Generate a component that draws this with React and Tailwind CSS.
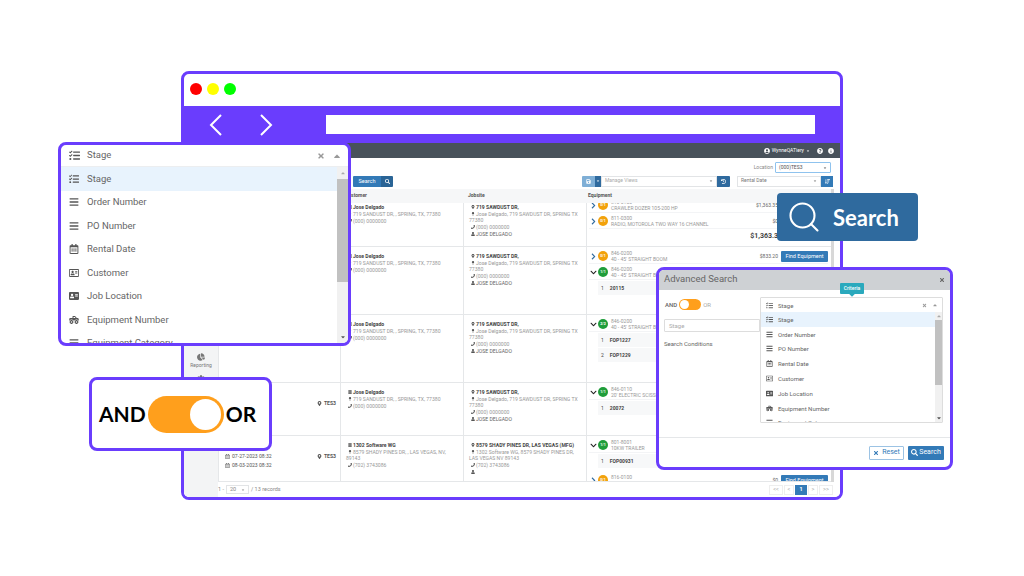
import {
  FaTasks, FaBars, FaRegCalendarAlt, FaRegAddressCard, FaAddressCard, FaTruckMonster,
  FaTimes, FaCaretUp, FaCaretDown, FaSearch, FaSave, FaHistory, FaSortAmountDown,
  FaQuestionCircle, FaInfoCircle, FaUserCircle, FaMapMarkerAlt, FaPhone, FaUser,
  FaBuilding, FaChevronRight, FaChevronDown, FaChartPie, FaMapPin, FaCog,
} from "react-icons/fa";
import { Search } from "lucide-react";

const options = [
  { label: "Stage", Icon: FaTasks },
  { label: "Order Number", Icon: FaBars },
  { label: "PO Number", Icon: FaBars },
  { label: "Rental Date", Icon: FaRegCalendarAlt },
  { label: "Customer", Icon: FaRegAddressCard },
  { label: "Job Location", Icon: FaAddressCard },
  { label: "Equipment Number", Icon: FaTruckMonster },
  { label: "Equipment Category", Icon: FaBars },
];

const sawdust = {
  customer: "Jose Delgado",
  address: "719 SANDUST DR, , SPRING, TX, 77380",
  phone: "(000) 0000000",
  site: "719 SAWDUST DR,",
  siteLine: "Jose Delgado, 719 SAWDUST DR, SPRING TX 77380",
  contact: "JOSE DELGADO",
};

const rows = [
  {
    ...sawdust, height: "h-[44px]", clip: "-mt-[5px]", equipClip: "-mt-[7px]",
    equipment: [
      { code: "816-0100", name: "CRAWLER DOZER 105-200 HP", badge: "0/1", price: "$1,363.35", find: true },
      { code: "811-0300", name: "RADIO, MOTOROLA TWO WAY 16 CHANNEL", badge: "0/1", price: "$0", find: true },
    ],
    total: "$1,363.35",
  },
  {
    ...sawdust, height: "h-[68px]",
    equipment: [
      { code: "846-0200", name: "40 - 45' STRAIGHT BOOM", badge: "0/1", price: "$833.20", find: true },
      { code: "846-0200", name: "40 - 45' STRAIGHT BOOM", badge: "1/1", open: true, find: true, items: ["20115"] },
    ],
  },
  {
    ...sawdust, height: "h-[68px]",
    equipment: [
      { code: "846-0200", name: "40 - 45' STRAIGHT BOOM", badge: "2/2", open: true, items: ["FOP1227", "FOP1229"] },
    ],
  },
  {
    ...sawdust, height: "h-[53px]", location: "TES3",
    equipment: [
      { code: "846-0110", name: "20' ELECTRIC SCISSOR", badge: "1/1", open: true, items: ["20072"] },
    ],
  },
  {
    height: "h-[46px]", location: "TES3", dates: ["07-27-2023 08:32", "08-03-2023 08:32"],
    customer: "1302 Software WG",
    address: "8579 SHADY PINES DR, , LAS VEGAS, NV, 89143",
    phone: "(702) 3743086",
    site: "8579 SHADY PINES DR, LAS VEGAS (MFG)",
    siteLine: "1302 Software WG, 8579 SHADY PINES DR, LAS VEGAS NV 89143",
    contact: "",
    equipment: [
      { code: "801-8001", name: "10KW TRAILER", badge: "1/1", open: true, items: ["FOP00931"] },
      { code: "816-0100", name: "CRAWLER DOZER 105-200 HP", badge: "0/1", price: "$0", find: true },
    ],
  },
];

function Line({ Icon, className = "", children }) {
  return (
    <div className={`mb-[1px] ${className}`}>
      <span className="inline-flex w-[7px] justify-center text-[#555]">
        <Icon size={4} />
      </span>
      {children}
    </div>
  );
}

function Equipment({ item }) {
  const done = item.badge !== "0/1";
  return (
    <div className={item.open ? "mb-[5px]" : "mb-[1px]"}>
      <div className="flex items-center h-[15px] border-b border-gray-100">
        <span className="w-[9px] flex justify-center text-[#2f6a9e]">
          {item.open ? <FaChevronDown size={7} className="text-[#222]" /> : <FaChevronRight size={7} />}
        </span>
        <span className={`w-[10px] h-[10px] rounded-full flex items-center justify-center text-[3.5px] font-bold text-white ${done ? "bg-[#1f9d3a]" : "bg-[#f2a20c]"}`}>
          {item.badge}
        </span>
        <div className="ml-[3px] flex-1 min-w-0 leading-[6px] text-[#999] text-[5px] whitespace-nowrap">
          <div>{item.code}</div>
          <div>{item.name}</div>
        </div>
        {item.price && <span className="text-[5px] text-[#666] mr-[3px]">{item.price}</span>}
        {item.find && (
          <span className="w-[47px] h-[11px] rounded-[1px] bg-[#337ab7] text-white text-[5.5px] flex items-center justify-center">
            Find Equipment
          </span>
        )}
      </div>
      {item.items?.map((value, i) => (
        <div key={value} className="flex items-center h-[14px] mt-[1px] ml-[9px] pl-[3px] bg-[#f7f8f9] text-[5px] gap-[6px] text-[#444]">
          <span>{i + 1}</span>
          <span className="font-bold">{value}</span>
        </div>
      ))}
    </div>
  );
}

function Row({ row }) {
  return (
    <div className={`grid grid-cols-[122px_123px_123px_244px] shrink-0 overflow-hidden border-b border-[#e5e7e9] text-[5.1px] leading-[6px] text-[#999] ${row.height}`}>
      <div className="flex items-start justify-between pl-[6px] pr-[4px] pt-[17px] border-r border-[#e5e7e9]">
        <div className="flex flex-col gap-[3px] text-[#555]">
          {row.dates?.map((d) => (
            <span key={d} className="flex items-center gap-[2px]">
              <FaRegCalendarAlt size={5} />
              {d}
            </span>
          ))}
        </div>
        {row.location && (
          <span className="flex items-center gap-[2px] font-bold text-[#555]">
            <FaMapMarkerAlt size={5} />
            {row.location}
          </span>
        )}
      </div>
      <div className={`pl-[5px] pr-[14px] pt-[6px] border-r border-[#e5e7e9] ${row.clip ?? ""}`}>
        <Line Icon={FaBuilding} className="font-bold text-[#444]">{row.customer}</Line>
        <Line Icon={FaMapPin}>{row.address}</Line>
        <Line Icon={FaPhone}>{row.phone}</Line>
      </div>
      <div className={`pl-[5px] pr-[5px] pt-[6px] border-r border-[#e5e7e9] ${row.clip ?? ""}`}>
        <Line Icon={FaMapMarkerAlt} className="font-bold text-[#444] whitespace-nowrap">{row.site}</Line>
        <Line Icon={FaMapPin}>{row.siteLine}</Line>
        <Line Icon={FaPhone}>{row.phone}</Line>
        <Line Icon={FaUser} className="text-[#666]">{row.contact}</Line>
      </div>
      <div className={`pl-[2px] pr-[3px] pt-[2px] ${row.equipClip ?? ""}`}>
        {row.equipment.map((item, i) => (
          <Equipment key={i} item={item} />
        ))}
        {row.total && <div className="text-right text-[7px] leading-[12px] font-bold text-[#444] pr-[46px]">{row.total}</div>}
      </div>
    </div>
  );
}

function AppScreen() {
  return (
    <div className="flex-1 min-h-0 flex flex-col bg-white text-[#666] font-['Roboto',sans-serif]">
      <div className="h-[15px] shrink-0 bg-[#48525b] flex items-center justify-end gap-[5px] pr-[6px] text-white text-[5px]">
        <span className="flex items-center gap-[2px]">
          <FaUserCircle size={6} />
          WynneQATiery
          <FaCaretDown size={4} />
        </span>
        <FaQuestionCircle size={6} className="ml-[2px]" />
        <FaInfoCircle size={6} />
      </div>
      <div className="flex-1 min-h-0 flex">
        <div className="w-[34px] shrink-0 bg-[#f3f4f5] flex flex-col items-center pt-[195px] text-[#777]">
          <FaChartPie size={8} />
          <span className="text-[5px] mt-[1px]">Reporting</span>
          <FaCog size={8} className="mt-[5px]" />
        </div>
        <div className="flex-1 min-w-0 flex flex-col">
          <div className="h-[16px] shrink-0 flex items-center justify-end pr-[9px] gap-[2px] pt-[3px]">
            <span className="text-[5px] text-[#888]">Location</span>
            <div className="w-[56px] h-[11px] border border-[#8fc3ee] rounded-[1px] flex items-center justify-between px-[3px] text-[5px] text-[#555]">
              (000)TES3
              <FaCaretDown size={4} />
            </div>
          </div>
          <div className="h-[14px] shrink-0 flex items-center pl-[135px]">
            <div className="flex w-[40px] h-[11px] rounded-[1px] overflow-hidden text-white text-[5.5px]">
              <span className="flex-1 bg-[#337ab7] flex items-center justify-center">Search</span>
              <span className="w-[12px] bg-[#2a6496] flex items-center justify-center">
                <FaSearch size={5} />
              </span>
            </div>
            <div className="flex ml-[189px] h-[11px]">
              <span className="w-[13px] bg-[#7fafd6] rounded-l-[1px] flex items-center justify-center text-white">
                <FaSave size={5} />
              </span>
              <span className="w-[6px] bg-[#2f6a9e] flex items-center justify-center text-white">
                <FaCaretDown size={4} />
              </span>
              <span className="w-[116px] border border-[#e2e4e6] flex items-center justify-between px-[3px] text-[5px] text-[#aaa]">
                Manage Views
                <FaCaretDown size={4} className="text-[#777]" />
              </span>
              <span className="w-[13px] bg-[#2f6a9e] rounded-r-[1px] flex items-center justify-center text-white">
                <FaHistory size={5} />
              </span>
            </div>
            <div className="flex ml-[7px] h-[11px]">
              <span className="w-[84px] border border-[#e2e4e6] flex items-center justify-between px-[3px] text-[5px] text-[#777]">
                Rental Date
                <FaCaretDown size={4} />
              </span>
              <span className="w-[12px] bg-[#337ab7] flex items-center justify-center text-white">
                <FaSortAmountDown size={5} />
              </span>
            </div>
          </div>
          <div className="flex shrink-0 mt-[1px]">
            <div className="w-[613px] flex flex-col">
              <div className="grid grid-cols-[122px_123px_123px_244px] h-[14px] shrink-0 items-center bg-[#f6f7f8] text-[5px] font-bold text-[#555]">
                <span />
                <span className="pl-[5px]">Customer</span>
                <span className="pl-[5px]">Jobsite</span>
                <span className="pl-[2px]">Equipment</span>
              </div>
              <div className="h-[279px] overflow-hidden flex flex-col border-l border-[#e5e7e9]">
                {rows.map((row, i) => (
                  <Row key={i} row={row} />
                ))}
              </div>
            </div>
            <span className="w-[3px] bg-[#d8d8d8]" />
          </div>
          <div className="flex-1 flex items-center pr-[7px] text-[5.5px] text-[#888]">
            <span>1 -</span>
            <span className="w-[23px] h-[9px] border border-[#e2e4e6] mx-[2px] flex items-center justify-between px-[3px]">
              20
              <FaCaretDown size={4} />
            </span>
            <span>/ 13 records</span>
            <div className="ml-auto flex gap-[1px] h-[10px] text-[#aaa]">
              {["<<", "<", "1", ">", ">>"].map((p) => (
                <span key={p} className={`flex items-center justify-center ${p === "1" ? "w-[12px] bg-[#337ab7] text-white font-bold" : p.length > 1 ? "w-[14px] border border-[#eee]" : "w-[10px] border border-[#eee]"}`}>
                  {p}
                </span>
              ))}
            </div>
          </div>
        </div>
      </div>
    </div>
  );
}

function OptionList({ rowHeight, iconSize, iconBox, textSize, listHeight, scrollWidth, arrowBox, thumb }) {
  return (
    <div className="flex overflow-hidden" style={{ height: listHeight }}>
      <div className="flex-1 min-w-0">
        {options.map(({ label, Icon }, i) => (
          <div key={label} className={`flex items-center text-[#666] ${i === 0 ? "bg-[#e8f3fd]" : ""}`} style={{ height: rowHeight, fontSize: textSize }}>
            <span className="flex justify-center text-[#555]" style={{ width: iconBox }}>
              <Icon size={iconSize} />
            </span>
            {label}
          </div>
        ))}
      </div>
      <div className="bg-[#f1f1f1] flex flex-col items-center text-[#555]" style={{ width: scrollWidth }}>
        <span className="flex items-center justify-center shrink-0" style={{ height: arrowBox }}>
          <FaCaretUp size={6} className="text-[#aaa]" />
        </span>
        <div className="w-full bg-[#c1c1c1] mb-auto" style={{ height: thumb }} />
        <span className="flex items-center justify-center shrink-0" style={{ height: arrowBox }}>
          <FaCaretDown size={6} />
        </span>
      </div>
    </div>
  );
}

function Toggle({ big }) {
  return big ? (
    <div className="w-[76px] h-[37px] rounded-full bg-[#ff9f1c] flex items-center justify-end pr-[3px]">
      <span className="w-[31px] h-[31px] rounded-full bg-white" />
    </div>
  ) : (
    <div className="w-[22px] h-[11px] rounded-full bg-[#ff9f1c] flex items-center pl-[1px]">
      <span className="w-[9px] h-[9px] rounded-full bg-white" />
    </div>
  );
}

export default function App() {
  return (
    <div className="relative w-[1024px] h-[576px] overflow-hidden bg-white font-['Roboto',sans-serif]">
      {/* browser frame */}
      <div className="absolute left-[181px] top-[71px] w-[662px] h-[429px] border-[3px] border-[#6a3dfd] rounded-[8px] overflow-hidden flex flex-col bg-white">
        <div className="h-[32px] shrink-0 flex items-center gap-[5px] pl-[6px] pb-[2px]">
          <span className="w-[12px] h-[12px] rounded-full bg-[#ff0000]" />
          <span className="w-[12px] h-[12px] rounded-full bg-[#ffff00]" />
          <span className="w-[12px] h-[12px] rounded-full bg-[#00ff00]" />
        </div>
        <div className="h-[37px] shrink-0 bg-[#6a3dfd] flex items-center">
          <svg width="14" height="22" viewBox="0 0 14 22" className="ml-[25px]" fill="none" stroke="white" strokeWidth="2">
            <path d="M12 1 L2 11 L12 21" />
          </svg>
          <svg width="14" height="22" viewBox="0 0 14 22" className="ml-[36px]" fill="none" stroke="white" strokeWidth="2">
            <path d="M2 1 L12 11 L2 21" />
          </svg>
          <div className="ml-[53px] w-[489px] h-[19px] bg-white" />
        </div>
        <AppScreen />
      </div>

      {/* field dropdown */}
      <div className="absolute left-[58px] top-[142px] w-[293px] h-[204px] border-[3px] border-[#6a3dfd] rounded-[8px] overflow-hidden bg-white">
        <div className="h-[22px] flex items-center border-b border-[#eceef0] text-[9.5px] text-[#666]">
          <span className="w-[26px] flex justify-center text-[#555]">
            <FaTasks size={11} />
          </span>
          Stage
          <span className="ml-auto text-[#999] mr-[7px]">
            <FaTimes size={8} />
          </span>
          <span className="text-[#999] mr-[6px]">
            <FaCaretUp size={10} />
          </span>
        </div>
        <OptionList rowHeight={23.5} iconSize={10} iconBox={26} textSize={9.5} listHeight={176} scrollWidth={11} arrowBox={12} thumb={103} />
      </div>

      {/* AND / OR toggle */}
      <div className="absolute left-[89px] top-[377px] w-[183px] h-[74px] border-[3px] border-[#6a3dfd] rounded-[8px] bg-white flex items-center pl-[7px] gap-[2px] font-['Lato',sans-serif] font-bold text-[21px] text-black">
        AND
        <Toggle big />
        OR
      </div>

      {/* search button callout */}
      <div className="absolute left-[777px] top-[193px] w-[141px] h-[48px] rounded-[4px] bg-[#2f6a9e] flex items-center pl-[9px] gap-[11px] text-white font-['Lato',sans-serif] font-bold text-[22px]">
        <Search size={36} strokeWidth={1.4} />
        Search
      </div>

      {/* advanced search modal */}
      <div className="absolute left-[656px] top-[267px] w-[297px] h-[203px] border-[3px] border-[#6a3dfd] rounded-[8px] overflow-hidden bg-white flex flex-col">
        <div className="h-[20px] shrink-0 bg-[#ced1d4] flex items-center justify-between px-[5px] pb-[1px] text-[9.5px] text-[#666]">
          Advanced Search
          <FaTimes size={6} />
        </div>
        <div className="h-[148px] shrink-0 flex pl-[5px] border-b border-[#e5e7e9]">
          <div className="w-[96px] text-[6px] pt-[9px] text-[#666]">
            <div className="flex items-center gap-[2px] h-[11px] pl-[1px]">
              <span className="font-medium">AND</span>
              <Toggle />
              <span className="text-[#aaa]">OR</span>
            </div>
            <div className="h-[13px] mt-[9px] border border-[#ddd] rounded-l-[1px] flex items-center pl-[4px] text-[#aaa]">Stage</div>
            <div className="mt-[7px]">Search Conditions</div>
          </div>
          <div className="w-[183px] mt-[7px] h-[126px] border border-[#ddd] rounded-[1px]">
            <div className="h-[14px] flex items-center text-[6px] text-[#666]">
              <span className="w-[17px] flex justify-center">
                <FaTasks size={7} />
              </span>
              Stage
              <FaTimes size={5} className="ml-auto mr-[5px] text-[#999]" />
              <FaCaretUp size={6} className="mr-[4px] text-[#999]" />
            </div>
            <OptionList rowHeight={14.8} iconSize={7} iconBox={17} textSize={6} listHeight={110} scrollWidth={7} arrowBox={8} thumb={65} />
          </div>
        </div>
        <div className="flex-1 flex items-center justify-end gap-[4px] pr-[6px] text-[7px]">
          <span className="w-[35px] h-[14px] border border-[#9cc3e4] rounded-[1px] flex items-center justify-center gap-[3px] text-[#337ab7]">
            <FaTimes size={6} />
            Reset
          </span>
          <span className="w-[36px] h-[14px] bg-[#337ab7] rounded-[1px] flex items-center justify-center gap-[1px] text-white">
            <FaSearch size={7} />
            Search
          </span>
        </div>
      </div>

      {/* criteria tooltip */}
      <div className="absolute left-[840px] top-[283px] w-[24px] h-[11px] rounded-[1px] bg-[#2aa9bd] flex items-center justify-center text-white text-[5px] font-medium">
        Criteria
        <span className="absolute left-[10px] -bottom-[2px] w-[4px] h-[4px] rotate-45 bg-[#2aa9bd]" />
      </div>
    </div>
  );
}
